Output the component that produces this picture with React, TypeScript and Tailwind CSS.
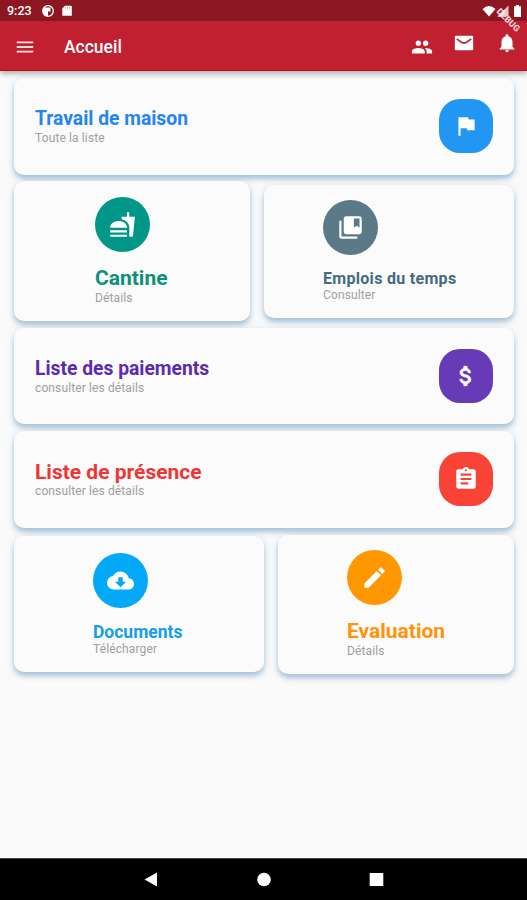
import type { IconType } from "react-icons";
import {
  MdMenu, MdPeople, MdNotifications, MdFlag, MdFastfood, MdCollectionsBookmark,
  MdAttachMoney, MdAssignment, MdCloudDownload, MdEdit,
} from "react-icons/md";

const shadow = "bg-[#fbfbfb] rounded-[10px] shadow-[0_4px_5px_rgba(70,130,180,0.38),0_2px_10px_rgba(70,130,180,0.16)]";

type Item = { title: string; sub: string; icon: IconType; color: string; bg: string; size: string };

function Label({ title, sub, color, size }: Item) {
  return (
    <div className="flex flex-col whitespace-nowrap">
      <span className={`font-bold ${size} ${color}`}>{title}</span>
      <span className="text-[12px] leading-[14px] tracking-[0.12px] text-[#a0a0a0]">{sub}</span>
    </div>
  );
}

function Wide({ item, box, glyph = "" }: { item: Item; box: string; glyph?: string }) {
  const Icon = item.icon;
  return (
    <section className={`flex items-center justify-between pl-[21px] pr-[21px] ${shadow} ${box}`}>
      <Label {...item} />
      <div className={`flex size-[54px] items-center justify-center rounded-[21px] text-white ${item.bg}`}>
        <Icon size={26} className={glyph} />
      </div>
    </section>
  );
}

function Tile({ item, box }: { item: Item; box: string }) {
  const Icon = item.icon;
  return (
    <section className={`flex flex-col items-start ${shadow} ${box}`}>
      <div className={`flex size-[55px] shrink-0 items-center justify-center rounded-full text-white ${item.bg}`}>
        <Icon size={27} />
      </div>
      <div className="h-[14px] shrink-0" />
      <Label {...item} />
    </section>
  );
}

const homework: Item = { title: "Travail de maison", sub: "Toute la liste", icon: MdFlag, color: "text-[#2484f0]", bg: "bg-[#2196f3]", size: "text-[19.3px] leading-[24px]" };
const canteen: Item = { title: "Cantine", sub: "Détails", icon: MdFastfood, color: "text-[#0e9079]", bg: "bg-[#009688]", size: "text-[21px] leading-[25px]" };
const schedule: Item = { title: "Emplois du temps", sub: "Consulter", icon: MdCollectionsBookmark, color: "text-[#446a7c]", bg: "bg-[#5b7987]", size: "text-[16px] leading-[19px] tracking-[0.3px]" };
const payments: Item = { title: "Liste des paiements", sub: "consulter les détails", icon: MdAttachMoney, color: "text-[#5a2ab0]", bg: "bg-[#673ab7]", size: "text-[19.3px] leading-[24px]" };
const presence: Item = { title: "Liste de présence", sub: "consulter les détails", icon: MdAssignment, color: "text-[#f03535]", bg: "bg-[#f94336]", size: "text-[21px] leading-[24px]" };
const documents: Item = { title: "Documents", sub: "Télécharger", icon: MdCloudDownload, color: "text-[#139fe9]", bg: "bg-[#03a9f4]", size: "text-[17.5px] leading-[20px]" };
const evaluation: Item = { title: "Evaluation", sub: "Détails", icon: MdEdit, color: "text-[#ff940b]", bg: "bg-[#ff9800]", size: "text-[21px] leading-[25px]" };

export default function App() {
  return (
    <div className="relative flex h-[900px] w-[527px] flex-col overflow-hidden bg-[#fafafa] font-['Roboto',sans-serif]">
      <div className="z-10 flex h-[21px] shrink-0 items-center bg-[#8c1722] pl-[7px] pr-[6px] text-white">
        <span className="w-[35px] pt-px text-[12.5px] font-medium leading-none">9:23</span>
        <svg className="h-3 w-3" viewBox="0 0 12 12">
          <circle cx="6" cy="6" r="5.3" fill="#8c1722" stroke="white" strokeWidth="1.3" />
          <path d="M3 2.5h5.5v4H6V11A5 5 0 0 1 1 7V3z" fill="white" />
        </svg>
        <svg className="ml-[8px] h-3 w-[10px]" viewBox="0 0 10 12">
          <path d="M3 .8h6a.8.8 0 0 1 .8.8v9.2H.3V3.4z" fill="white" />
          <path d="M3.5 2v1.7M5.5 2v1.7M7.5 2v1.7" stroke="#c77" strokeWidth=".6" />
        </svg>
        <div className="flex-1" />
        <svg className="h-[12px] w-[14px]" viewBox="0 0 13 12"><path d="M0 4Q6.5-2 13 4L6.5 11.5z" fill="white" /></svg>
        <svg className="ml-[1px] h-[12px] w-[12px]" viewBox="0 0 12 12">
          <path d="M11.5.5V11.5H.5z" fill="#e9c4c7" /><path d="M7.5 4.5V11.5H.5z" fill="white" />
        </svg>
        <svg className="ml-[5px] h-[12px] w-[7px]" viewBox="0 0 7 12"><path d="M2 0h3v1.2h2V12H0V1.2h2z" fill="white" /></svg>
      </div>
      <header className="z-10 flex h-[50px] shrink-0 items-center border-b border-[#b50f1a] bg-[#c02030] pl-[14px] pr-[9px] pt-[2px] text-white shadow-[0_3px_5px_rgba(0,0,0,0.28)]">
        <MdMenu size={22} className="text-[#ffe0da]" />
        <h1 className="ml-[28px] flex-1 pt-px text-[17.5px] font-medium leading-[22px]">Accueil</h1>
        <MdPeople size={22} />
        <svg className="mb-[7px] ml-[20px] size-[22px]" viewBox="0 0 24 24">
          <rect x="2" y="4" width="20" height="16" rx="1.2" fill="white" />
          <path d="M4 7.5 9.8 11.4Q12 12.7 14.2 11.4L20 7.5" fill="none" stroke="#c02030" strokeWidth="1.8" />
        </svg>
        <MdNotifications size={22} className="mb-[7px] ml-[21px]" />
      </header>
      <span className="absolute left-[491px] top-[16px] z-20 h-[9px] w-[34px] origin-center rotate-45 text-center text-[9px] font-black leading-[9px] text-[#edcdd0]">DEBUG</span>

      <main className="flex flex-1 flex-col pl-[14px] pr-[13px] pt-[7px]">
        <Wide item={homework} box="h-[97px] shrink-0 pb-[1px]" />
        <div className="mt-[6px] flex h-[140px] shrink-0 items-start justify-between">
          <Tile item={canteen} box="h-[140px] w-[236px] pl-[81px] pt-[16px]" />
          <Tile item={schedule} box="mt-[4px] h-[133px] w-[250px] pl-[59px] pt-[15px]" />
        </div>
        <Wide item={payments} box="mt-[7px] h-[96px] shrink-0 pb-[1px]" glyph="stroke-white stroke-[0.7] [&>path:first-child]:stroke-none" />
        <Wide item={presence} box="mt-[7px] h-[97px] shrink-0 pb-px" />
        <div className="mt-[7px] flex h-[139px] shrink-0 items-start justify-between">
          <Tile item={documents} box="mt-[1px] h-[136px] w-[250px] pl-[79px] pt-[17px]" />
          <Tile item={evaluation} box="h-[139px] w-[236px] pl-[69px] pt-[15px]" />
        </div>
      </main>

      <nav className="h-[42px] shrink-0 border-t border-[#444] bg-black">
        <svg width="527" height="41" viewBox="0 0 527 41" fill="white">
          <path d="M144.5 20.5 157 13.5v14z" />
          <circle cx="264" cy="20.5" r="6.8" />
          <rect x="369.7" y="14" width="13.6" height="13" rx=".5" />
        </svg>
      </nav>
    </div>
  );
}
